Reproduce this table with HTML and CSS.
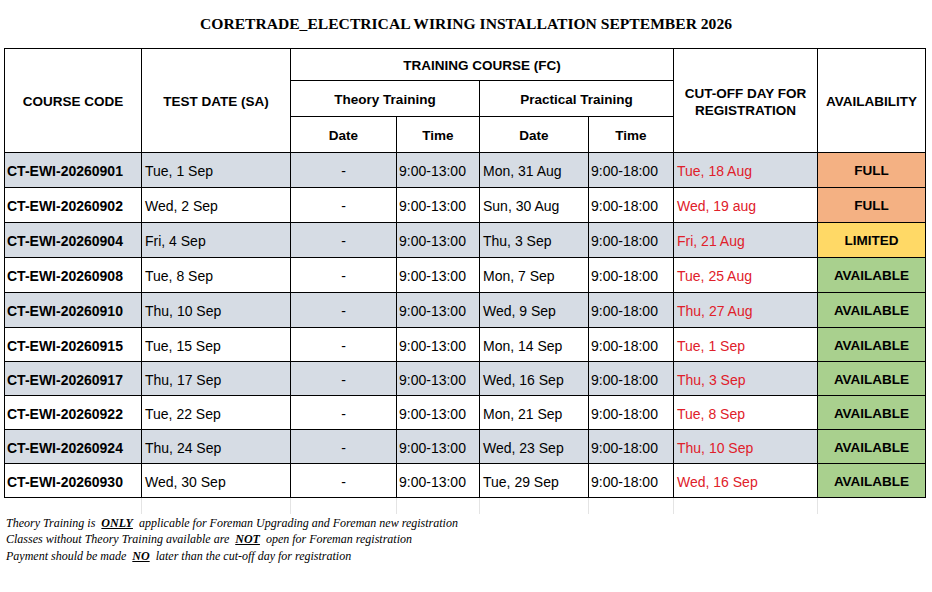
FILE: index.html
```html
<!DOCTYPE html>
<html>
<head>
<meta charset="utf-8">
<link rel="stylesheet" href="styles.css">
</head>
<body>
<h1 class="title">CORETRADE_ELECTRICAL WIRING INSTALLATION SEPTEMBER 2026</h1>
<table class="sched">
  <colgroup>
    <col class="c1"><col class="c2"><col class="c3"><col class="c4"><col class="c5"><col class="c6"><col class="c7"><col class="c8">
  </colgroup>
  <thead>
    <tr class="h1">
      <th rowspan="3">COURSE CODE</th>
      <th rowspan="3">TEST DATE (SA)</th>
      <th colspan="4">TRAINING COURSE (FC)</th>
      <th rowspan="3">CUT-OFF DAY FOR<br>REGISTRATION</th>
      <th rowspan="3">AVAILABILITY</th>
    </tr>
    <tr class="h2">
      <th colspan="2">Theory Training</th>
      <th colspan="2">Practical Training</th>
    </tr>
    <tr class="h3">
      <th>Date</th><th>Time</th><th>Date</th><th>Time</th>
    </tr>
  </thead>
  <tbody>
    <tr class="band r35"><td class="code">CT-EWI-20260901</td><td>Tue, 1 Sep</td><td class="dash">-</td><td class="time">9:00-13:00</td><td>Mon, 31 Aug</td><td class="time">9:00-18:00</td><td class="cut">Tue, 18 Aug</td><td class="av full">FULL</td></tr>
    <tr class="r35"><td class="code">CT-EWI-20260902</td><td>Wed, 2 Sep</td><td class="dash">-</td><td class="time">9:00-13:00</td><td>Sun, 30 Aug</td><td class="time">9:00-18:00</td><td class="cut">Wed, 19 aug</td><td class="av full">FULL</td></tr>
    <tr class="band r35"><td class="code">CT-EWI-20260904</td><td>Fri, 4 Sep</td><td class="dash">-</td><td class="time">9:00-13:00</td><td>Thu, 3 Sep</td><td class="time">9:00-18:00</td><td class="cut">Fri, 21 Aug</td><td class="av limited">LIMITED</td></tr>
    <tr class="r35"><td class="code">CT-EWI-20260908</td><td>Tue, 8 Sep</td><td class="dash">-</td><td class="time">9:00-13:00</td><td>Mon, 7 Sep</td><td class="time">9:00-18:00</td><td class="cut">Tue, 25 Aug</td><td class="av avail">AVAILABLE</td></tr>
    <tr class="band r35"><td class="code">CT-EWI-20260910</td><td>Thu, 10 Sep</td><td class="dash">-</td><td class="time">9:00-13:00</td><td>Wed, 9 Sep</td><td class="time">9:00-18:00</td><td class="cut">Thu, 27 Aug</td><td class="av avail">AVAILABLE</td></tr>
    <tr class="r34"><td class="code">CT-EWI-20260915</td><td>Tue, 15 Sep</td><td class="dash">-</td><td class="time">9:00-13:00</td><td>Mon, 14 Sep</td><td class="time">9:00-18:00</td><td class="cut">Tue, 1 Sep</td><td class="av avail">AVAILABLE</td></tr>
    <tr class="band r34"><td class="code">CT-EWI-20260917</td><td>Thu, 17 Sep</td><td class="dash">-</td><td class="time">9:00-13:00</td><td>Wed, 16 Sep</td><td class="time">9:00-18:00</td><td class="cut">Thu, 3 Sep</td><td class="av avail">AVAILABLE</td></tr>
    <tr class="r34"><td class="code">CT-EWI-20260922</td><td>Tue, 22 Sep</td><td class="dash">-</td><td class="time">9:00-13:00</td><td>Mon, 21 Sep</td><td class="time">9:00-18:00</td><td class="cut">Tue, 8 Sep</td><td class="av avail">AVAILABLE</td></tr>
    <tr class="band r34"><td class="code">CT-EWI-20260924</td><td>Thu, 24 Sep</td><td class="dash">-</td><td class="time">9:00-13:00</td><td>Wed, 23 Sep</td><td class="time">9:00-18:00</td><td class="cut">Thu, 10 Sep</td><td class="av avail">AVAILABLE</td></tr>
    <tr class="r34"><td class="code">CT-EWI-20260930</td><td>Wed, 30 Sep</td><td class="dash">-</td><td class="time">9:00-13:00</td><td>Tue, 29 Sep</td><td class="time">9:00-18:00</td><td class="cut">Wed, 16 Sep</td><td class="av avail">AVAILABLE</td></tr>
    <tr class="grid"><td></td><td></td><td></td><td></td><td></td><td></td><td></td><td></td></tr>
  </tbody>
</table>
<div class="notes">
  <p>Theory Training is <b>ONLY</b> applicable for Foreman Upgrading and Foreman new registration</p>
  <p>Classes without Theory Training available are <b>NOT</b> open for Foreman registration</p>
  <p>Payment should be made <b>NO</b> later than the cut-off day for registration</p>
</div>
</body>
</html>
```
FILE: styles.css
```css
html, body {
  margin: 0;
  padding: 0;
  background: #ffffff;
}
body {
  font-family: "Liberation Sans", Arial, sans-serif;
  color: #000;
}
.title {
  font-family: "Liberation Serif", "Times New Roman", serif;
  font-weight: bold;
  font-size: 15.6px;
  text-align: center;
  margin: 0;
  padding: 15px 0 0 0;
  height: 48px;
  box-sizing: border-box;
  line-height: 18px;
}
.sched {
  border-collapse: collapse;
  table-layout: fixed;
  margin-left: 4px;
  width: 921px;
}
.c1 { width: 137px; }
.c2 { width: 149px; }
.c3 { width: 106px; }
.c4 { width: 83px; }
.c5 { width: 109px; }
.c6 { width: 85px; }
.c7 { width: 144px; }
.c8 { width: 108px; }
.sched th, .sched td {
  border: 1px solid #000;
  padding: 2px 3px 0 3px;
  overflow: hidden;
  white-space: nowrap;
}
.sched th {
  font-size: 13.5px;
  font-weight: bold;
  text-align: center;
  line-height: 17px;
}
.h1 { height: 32px; }
.h2 { height: 36px; }
.h3 { height: 36px; }
.sched td {
  font-size: 14px;
  line-height: 16px;
  text-align: left;
}
.r35 { height: 35px; }
.r34 { height: 34px; }
.band td { background: #d6dce4; }
.sched td.code {
  font-weight: bold;
  padding-left: 2px;
}
.sched td.dash { text-align: center; }
.sched td.time { padding-left: 2px; }
.sched td.cut { color: #e0202a; }
.sched td.av {
  text-align: center;
  font-weight: bold;
  font-size: 13.5px;
}
.sched td.full { background: #f4b183; }
.sched td.limited { background: #ffd966; }
.sched td.avail { background: #a9d08e; }
.sched tr.grid { height: 16px; }
.sched tr.grid td {
  padding: 0;
  border-top: 1px solid #000;
  border-bottom: none;
  border-left: 1px solid #e4e4e4;
  border-right: 1px solid #e4e4e4;
  background: transparent;
}
.sched tr.grid td:first-child { border-left: none; }
.sched tr.grid td:last-child { border-right: none; }
.notes {
  font-family: "Liberation Serif", "Times New Roman", serif;
  font-style: italic;
  font-size: 12px;
  line-height: 16.5px;
  padding-left: 6px;
  margin-top: 1px;
}
.notes p { margin: 0; }
.notes b {
  text-decoration: underline;
  padding: 0 3px;
}
```
